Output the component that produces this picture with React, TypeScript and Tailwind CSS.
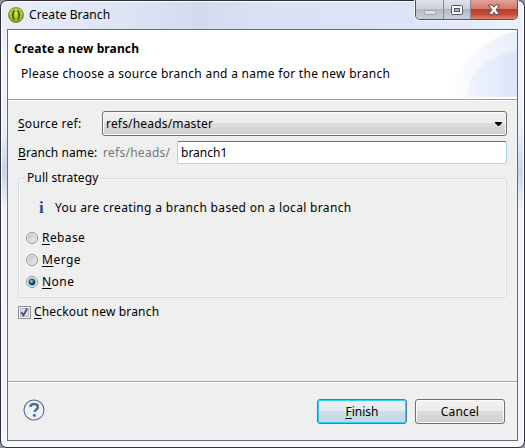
import { useState } from "react";

function EclipseIcon() {
  return (
    <svg width="16" height="16" viewBox="0 0 16 16">
      <defs>
        <radialGradient id="green" cx="50%" cy="35%" r="65%">
          <stop offset="0" stopColor="#c9e632" />
          <stop offset="0.7" stopColor="#9cc522" />
          <stop offset="1" stopColor="#6a8f14" />
        </radialGradient>
      </defs>
      <circle cx="8" cy="8" r="7.5" fill="url(#green)" stroke="#66861a" strokeWidth="0.8" />
      <path d="M6.6 3.8C5 4.2 5.3 5.8 5.1 6.8 5 7.6 4.4 8 3.8 8c.6 0 1.2.4 1.3 1.2.2 1-.1 2.6 1.5 3M9.4 3.8c1.6.4 1.3 2 1.5 3 .1.8.7 1.2 1.3 1.2-.6 0-1.2.4-1.3 1.2-.2 1 .1 2.6-1.5 3" fill="none" stroke="#40520f" strokeWidth="1.7" />
    </svg>
  );
}

function WindowControls() {
  return (
    <div className="flex h-[20px] w-[103px] overflow-hidden rounded-b-[5px] border border-t-0 border-[#4f5260] shadow-[0_0_0_1px_#f4f7fd]">
      <div className="flex w-[28px] justify-center border-r border-[#858995] bg-[linear-gradient(#dfe2ec_0%,#cdd1dd_46%,#b4b9c6_50%,#c9cedb_100%)] pt-[10px]">
        <span className="h-[5px] w-[12px] rounded-[1px] border border-[#a5a7ad] bg-[#dcdde0]" />
      </div>
      <div className="flex w-[27px] justify-center border-r border-[#858995] bg-[linear-gradient(#e1e4ee_0%,#cdd1dd_46%,#b0b6c4_50%,#ccd2df_100%)] pt-[5px]">
        <svg width="12" height="10" viewBox="0 0 12 10">
          <rect x="0.5" y="0.5" width="11" height="9" rx="1" fill="#fff" stroke="#535666" />
          <rect x="3.5" y="3.5" width="5" height="3" fill="#aeb5c7" stroke="#535666" />
        </svg>
      </div>
      <div className="flex flex-1 justify-center bg-[linear-gradient(#e6a298_0%,#d27a6b_45%,#bd3c29_50%,#c64a34_75%,#dc8570_100%)] pt-[4px]">
        <svg width="14" height="12" viewBox="0 0 14 12">
          <path d="M1.5 1h3.7L7 3.2 8.8 1h3.7L9.1 5.7l3.4 4.8H8.8L7 8.2l-1.8 2.3H1.5l3.4-4.8z" fill="#fff" stroke="#5d4c58" />
        </svg>
      </div>
    </div>
  );
}

function BannerArt() {
  return (
    <svg width="73" height="67" viewBox="0 0 73 67">
      <defs>
        <linearGradient id="outer">
          <stop offset="0" stopColor="#fff" />
          <stop offset="0.4" stopColor="#f6f9fd" />
          <stop offset="1" stopColor="#e8effa" />
        </linearGradient>
        <linearGradient id="inner">
          <stop offset="0" stopColor="#f0f5fc" />
          <stop offset="1" stopColor="#dce4f7" />
        </linearGradient>
      </defs>
      <path d="M0 67C14 33 39 8 73 1V67z" fill="url(#outer)" />
      <path d="M23 67C25 43 41 25 73 21V67z" fill="url(#inner)" />
    </svg>
  );
}

function Mnemonic({ text }: { text: string }) {
  return (
    <>
      <span className="underline decoration-1 underline-offset-2">{text[0]}</span>
      {text.slice(1)}
    </>
  );
}

function Radio({ label, checked, onSelect, className }: { label: string; checked: boolean; onSelect: () => void; className: string }) {
  return (
    <div role="radio" aria-checked={checked} onClick={onSelect} className="flex h-[22px] items-center">
      <svg width="12" height="12" viewBox="0 0 12 12" className="mr-[4px]">
        <defs>
          <linearGradient id="dish" x1="0" y1="0" x2="1" y2="1">
            <stop offset="0" stopColor="#b9bdc2" />
            <stop offset="1" stopColor="#f7f7f7" />
          </linearGradient>
          <radialGradient id="dot" cx="38%" cy="35%" r="65%">
            <stop offset="0" stopColor="#8fe0fa" />
            <stop offset="0.45" stopColor="#2380ae" />
            <stop offset="1" stopColor="#0b2b49" />
          </radialGradient>
        </defs>
        <circle cx="6" cy="6" r="5.5" fill="#f6f6f6" stroke="#8e8f8f" />
        <circle cx="6" cy="6" r="3.8" fill="url(#dish)" stroke="#c3c6ca" strokeWidth="0.6" />
        {checked && <circle cx="6" cy="6" r="3.1" fill="url(#dot)" stroke="#133956" strokeWidth="0.7" />}
      </svg>
      <span className={className}><Mnemonic text={label} /></span>
    </div>
  );
}

export default function App() {
  const [strategy, setStrategy] = useState("None");
  return (
    <div className="h-[448px] w-[525px] overflow-hidden bg-[#8d929b] font-['Noto_Sans','Open_Sans',sans-serif] text-[12px] leading-[16px] text-black">
      <div className="flex h-[448px] flex-col rounded-[7px] border border-[#302e38] bg-[linear-gradient(180deg,transparent_0px,transparent_28px,#f3f6fdcc_60px,#eaf0facc_130px,#b9c6deaa_170px,#f3f6fdcc_210px,#f3f6fd_100%),linear-gradient(90deg,#e9eefa_0%,#dce4f4_25%,#d0dcee_38%,#d9e2f6_50%,#dce4f7_80%,#edf2fc_100%)] pr-[6px] pb-[6px] pl-[6px] shadow-[inset_0_0_0_1px_#fff]">
        <div className="flex h-[28px] shrink-0 items-start">
          <div className="mt-[6px] ml-px"><EclipseIcon /></div>
          <span className="mt-[6px] ml-[5px] tracking-[0.1px] whitespace-nowrap">Create Branch</span>
          <div className="-mt-px ml-auto"><WindowControls /></div>
        </div>
        <div className="flex flex-1 flex-col border border-[#686d72] bg-[#efefef]">
          <header className="flex h-[70px] shrink-0 justify-between border-b border-[#a0a0a0] bg-white">
            <div className="pt-[11px] pl-[6px] whitespace-nowrap">
              <h1 className="font-bold tracking-[0.12px]">Create a new branch</h1>
              <p className="mt-[9px] ml-[7px] tracking-[0.28px]">Please choose a source branch and a name for the new branch</p>
            </div>
            <BannerArt />
          </header>
          <main className="flex flex-1 flex-col border-t border-white px-[10px] pt-[10px]">
            <div className="flex h-[25px] items-center">
              <label className="w-[84px] tracking-[0.27px] whitespace-nowrap"><Mnemonic text="Source ref:" /></label>
              <div className="flex h-[25px] flex-1 items-center justify-between rounded-[3px] border border-[#707070] bg-[linear-gradient(#f2f2f2_0%,#ebebeb_48%,#dddddd_50%,#cfcfcf_100%)] pr-[4px] pl-[3px] shadow-[inset_0_0_0_1px_#fafafa]">
                <span className="tracking-[0.18px]">refs/heads/master</span>
                <svg width="7" height="4" viewBox="0 0 7 4"><path d="M0 0h7v1L4 4H3L0 1z" /></svg>
              </div>
            </div>
            <div className="mt-[5px] flex h-[23px] items-center">
              <label className="w-[85px] tracking-[0.08px] whitespace-nowrap"><Mnemonic text="Branch name:" /></label>
              <span className="w-[74px] tracking-[0.27px] text-[#777]">refs/heads/</span>
              <div className="flex h-[23px] flex-1 items-center rounded-[2px] border border-[#b2d4e8] border-t-[#3d7bad] border-r-[#a4cee4] bg-white pl-[3px]">branch1</div>
            </div>
            <fieldset className="mt-[6px] h-[128px] rounded-[3px] border border-[#d3dfe7] px-[7px] shadow-[inset_0_0_0_1px_#fafafa]">
              <legend className="-ml-px bg-[#efefef] px-[2px] tracking-[0.1px]">Pull strategy</legend>
              <div className="mt-[12px] flex h-[20px] items-center whitespace-nowrap">
                <span className="ml-[13px] w-[16px] font-['Liberation_Serif',serif] text-[17px] font-bold text-[#164f91]">i</span>
                <span className="tracking-[0.33px]">You are creating a branch based on a local branch</span>
              </div>
              <div className="mt-[9px]">
                <Radio label="Rebase" checked={strategy === "Rebase"} onSelect={() => setStrategy("Rebase")} className="tracking-[0.4px]" />
                <Radio label="Merge" checked={strategy === "Merge"} onSelect={() => setStrategy("Merge")} className="tracking-[0.5px]" />
                <Radio label="None" checked={strategy === "None"} onSelect={() => setStrategy("None")} className="tracking-[0.45px]" />
              </div>
            </fieldset>
            <div className="mt-[5px] flex h-[18px] items-center">
              <svg width="13" height="13" viewBox="0 0 13 13" className="mr-[3px]">
                <rect x="0.5" y="0.5" width="12" height="12" fill="#f6f6f6" stroke="#8e8f8f" />
                <rect x="2.5" y="2.5" width="8" height="8" fill="#d9dde1" stroke="#b6babf" />
                <path d="M3.3 6.3l2.1 3L9.3 2.5" fill="none" stroke="#414d93" strokeWidth="1.8" />
              </svg>
              <span className="tracking-[0.17px]"><Mnemonic text="Checkout new branch" /></span>
            </div>
          </main>
          <footer className="flex h-[59px] shrink-0 border-t border-[#a0a0a0] px-[12px] shadow-[inset_0_1px_0_#fff]">
            <svg width="22" height="22" viewBox="0 0 22 22" className="mt-[17px] ml-[3px]">
              <circle cx="11" cy="11" r="10" fill="#eff1f4" stroke="#536b91" strokeWidth="1.1" />
              <path d="M7.3 8C7.5 5.9 9 5 11.1 5c2.3 0 3.8 1.1 3.8 2.9 0 2.6-3.2 2.5-3.2 5" fill="none" stroke="#596b98" strokeWidth="2.5" />
              <circle cx="11.4" cy="16.3" r="1.6" fill="#596b98" />
            </svg>
            <div className="mt-[17px] ml-auto flex gap-[8px]">
              <button className="h-[25px] w-[90px] rounded-[3px] border border-[#3c7fb1] bg-[linear-gradient(#ecf3f8_0%,#e0eaf1_48%,#cfdfe8_50%,#bfd5e1_100%)] shadow-[inset_0_0_0_1px_#31d0f6]"><Mnemonic text="Finish" /></button>
              <button className="h-[25px] w-[90px] rounded-[3px] border border-[#707070] bg-[linear-gradient(#f2f2f2_0%,#ebebeb_48%,#dddddd_50%,#cfcfcf_100%)] tracking-[0.15px] shadow-[inset_0_0_0_1px_#fafafa]">Cancel</button>
            </div>
          </footer>
        </div>
      </div>
    </div>
  );
}
